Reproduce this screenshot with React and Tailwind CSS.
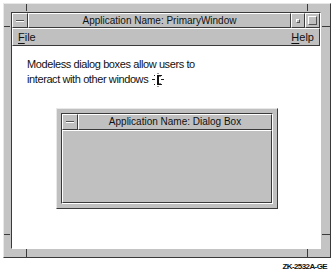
const grey = "bg-[#c0c0c0]";

function Notch({ className }) {
  return <div className={`absolute bg-[#3a3a3a] ${className}`} />;
}

function WinButton({ children, className = "" }) {
  return (
    <div
      className={`flex items-center justify-center border border-t-white border-l-white border-b-[#3a3a3a] border-r-[#3a3a3a] ${grey} ${className}`}
    >
      {children}
    </div>
  );
}

function Cursor() {
  return (
    <svg width="14" height="14" viewBox="0 0 14 14" className="ml-[3px]">
      <rect x="6" y="2" width="2" height="10" fill="#111" />
      <rect x="6" y="2" width="4" height="1.5" fill="#111" />
      <rect x="6" y="10.5" width="4" height="1.5" fill="#111" />
      <path d="M1 6.5h3M10 6.5h3M3 2l1 1M11 2l-1 1M3 12l1-1M11 12l-1-1M7 0v1M7 13v1" stroke="#222" strokeWidth="1" />
    </svg>
  );
}

export default function App() {
  return (
    <div className="w-[334px] h-[275px] bg-white overflow-hidden font-['Liberation_Sans',Arial,sans-serif] text-[#111]">
      <div className="relative ml-[3px] mt-[3px] w-[328px] h-[255px] bg-[#c4c4c4] border border-t-[#e8e8e8] border-l-[#e8e8e8] border-b-[#3a3a3a] border-r-[#3a3a3a] pl-[7px] pr-[9px] pt-[8px] pb-[8px]">
        <Notch className="left-[22px] top-0 w-px h-[7px]" />
        <Notch className="right-[22px] top-0 w-px h-[7px]" />
        <Notch className="left-[22px] bottom-0 w-px h-[8px]" />
        <Notch className="right-[22px] bottom-0 w-px h-[8px]" />
        <Notch className="left-0 top-[22px] h-px w-[6px]" />
        <Notch className="right-0 top-[22px] h-px w-[8px]" />
        <Notch className="left-0 bottom-[22px] h-px w-[6px]" />
        <Notch className="right-0 bottom-[22px] h-px w-[8px]" />
        <div className="flex flex-col h-full border border-t-[#3a3a3a] border-l-[#3a3a3a] border-b-white border-r-white">
          <div className="flex h-[15px]">
            <WinButton className="w-[16px] h-[15px]">
              <div className="w-[8px] h-[2px] bg-[#555] border-b border-white" />
            </WinButton>
            <WinButton className="flex-1 h-[15px] text-[10px] leading-none">
              Application Name: PrimaryWindow
            </WinButton>
            <WinButton className="w-[14px] h-[15px]">
              <div className="w-[4px] h-[4px] border border-t-white border-l-white border-b-[#555] border-r-[#555]" />
            </WinButton>
            <WinButton className="w-[15px] h-[15px]">
              <div className="w-[9px] h-[9px] border border-t-white border-l-white border-b-[#555] border-r-[#555]" />
            </WinButton>
          </div>
          <div className={`flex items-center justify-between h-[18px] px-[5px] text-[11px] ${grey} border border-t-white border-l-white border-b-[#3a3a3a] border-r-[#3a3a3a]`}>
            <span>
              <span className="underline underline-offset-2">F</span>ile
            </span>
            <span>
              <span className="underline underline-offset-2">H</span>elp
            </span>
          </div>
          <div className="flex-1 bg-white pl-[15px] pt-[11px]">
            <div className="text-[11px] leading-[15px] tracking-[-0.4px]">
              <div>Modeless dialog boxes allow users to</div>
              <div className="flex items-center">
                interact with other windows
                <Cursor />
              </div>
            </div>
            <div className="ml-[29px] mt-[21px] w-[222px] h-[101px] bg-[#c0c0c0] border border-t-[#e8e8e8] border-l-[#e8e8e8] border-b-[#3a3a3a] border-r-[#3a3a3a] p-[4px]">
              <div className="flex flex-col h-full border border-t-[#3a3a3a] border-l-[#3a3a3a] border-b-white border-r-white">
                <div className="flex h-[16px]">
                  <WinButton className="w-[16px] h-[16px]">
                    <div className="w-[8px] h-[2px] bg-[#555] border-b border-white" />
                  </WinButton>
                  <WinButton className="flex-1 h-[16px] text-[10px] leading-none">
                    Application Name: Dialog Box
                  </WinButton>
                </div>
                <div className="flex-1 border border-t-white border-l-white border-b-[#3a3a3a] border-r-[#3a3a3a] bg-[#c0c0c0]" />
              </div>
            </div>
          </div>
        </div>
      </div>
      <div className="flex justify-end pr-[7px] mt-[5px] text-[8px] font-bold tracking-[-0.6px] leading-none">
        ZK-2532A-GE
      </div>
    </div>
  );
}
